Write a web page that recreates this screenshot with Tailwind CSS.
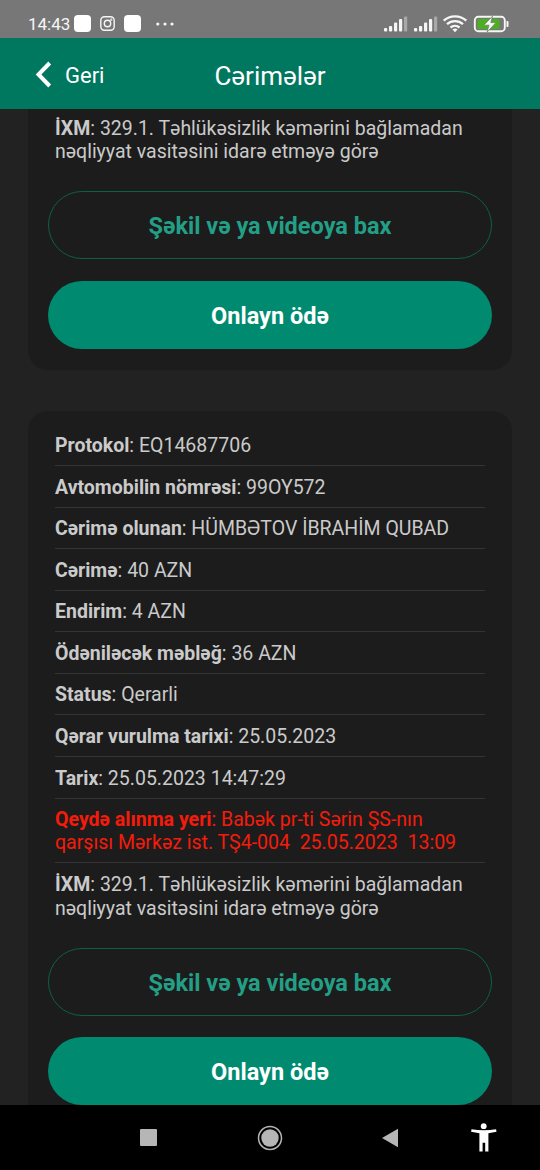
<!DOCTYPE html>
<html lang="az">
<head>
<meta charset="utf-8">
<title>Cərimələr</title>
<script src="https://cdn.jsdelivr.net/npm/@tailwindcss/browser@4"></script>
</head>
<body class="flex h-[1170px] w-[540px] flex-col overflow-hidden bg-[#222222] font-['Roboto',sans-serif] text-[19.500px] leading-[23.300px] text-[#cacaca]">
  <div class="flex h-[38px] shrink-0 items-center justify-between bg-[#777777] pt-[9px] pr-[30px] pl-7 text-[#f6f6f6]">
    <div class="flex items-center">
      <span class="w-[46px] whitespace-nowrap text-[17px] leading-5">14:43</span>
      <i class="block size-[17px] rounded-[4px] bg-white"></i>
      <svg class="ml-[9px] size-[15px]" viewBox="0 0 15 15" fill="none" stroke="currentColor" stroke-width="1.4"><rect x=".8" y=".8" width="13.4" height="13.4" rx="3.6"/><circle cx="7.5" cy="7.5" r="3.2"/><circle cx="11.3" cy="3.7" r=".4"/></svg>
      <i class="ml-[9px] block size-[17px] rounded-[4px] bg-white"></i>
      <svg class="ml-[14px] h-4 w-5" viewBox="0 0 20 16" fill="currentColor"><circle cx="2.8" cy="8" r="1.6"/><circle cx="10" cy="8" r="1.6"/><circle cx="17" cy="8" r="1.6"/></svg>
    </div>
    <svg class="h-[18px] w-[127px]" viewBox="0 0 127 18" fill="currentColor">
      <g id="signal"><rect x="1" y="13" width="3.2" height="3.5" rx="1"/><rect x="6" y="11" width="3.2" height="5.5" rx="1"/><rect x="11" y="7.500" width="3.2" height="9" rx="1"/><rect x="16" y="4" width="3.2" height="12.500" rx="1"/><rect x="21" y="1.500" width="3.2" height="15" rx="1" opacity=".4"/></g>
      <use href="#signal" x="30"/>
      <g fill="none" stroke="currentColor" stroke-width="2.300"><path d="M60.700 5.700C66.800-.2 77.200-.2 83.300 5.700M64 9.200c4.400-4.100 11.600-4.100 16 0M67.500 12.500c2.600-2.200 6.400-2.200 9 0"/></g>
      <path d="M69.500 14.500q2.500-2 5 0L72 17.200z"/>
      <rect x="94.500" y="4" width="22" height="10" fill="#4caf22"/>
      <rect x="91.800" y="1.800" width="30" height="14.400" rx="3.500" fill="none" stroke="currentColor" stroke-width="1.900"/>
      <path d="M123.500 6h1q1 0 1 1v4q0 1-1 1h-1z"/>
      <path d="M109.500 1.200 100.800 10.200h5.200l-2 7 9-9.600h-5.200z" stroke="#6b8a60" stroke-width=".8"/>
    </svg>
  </div>
  <header class="grid h-[71px] shrink-0 grid-cols-3 items-center bg-[#00775f] pt-[5px] text-white">
    <div class="flex items-center pl-[35px] text-[22px] leading-7">
      <svg class="-mt-[4px] mr-[13px] h-[27px] w-[17px] shrink-0" viewBox="0 0 17 27" fill="none" stroke="currentColor" stroke-width="4"><path d="M14.700 2 3.500 13.500 14.700 25"/></svg>Geri
    </div>
    <h1 class="text-center text-[26px] leading-7">Cərimələr</h1>
  </header>
  <main class="min-h-0 flex-1 overflow-hidden px-7">
    <section class="h-[260.500px] rounded-b-[20px] bg-[#1c1c1c] px-5 pt-[7.500px]">
      <p class="px-[7px] whitespace-nowrap"><b>İXM</b>: 329.1. Təhlükəsizlik kəmərini bağlamadan<br>nəqliyyat vasitəsini idarə etməyə görə</p>
      <button class="mt-[27.900px] block h-[68px] w-full rounded-full border border-[#0c6048] pt-[3px] text-[23.500px] font-bold text-[#239f86]">Şəkil və ya videoya bax</button>
      <button class="mt-[22px] block h-[68px] w-full rounded-full bg-[#008b70] pt-[3px] text-[23.500px] font-bold text-white">Onlayn ödə</button>
    </section>
    <section class="mt-[41px] rounded-t-[20px] bg-[#1c1c1c] px-5 pt-[13.900px]">
      <div class="px-[7px] whitespace-nowrap [&>p]:border-b [&>p]:border-[#343434] [&>p]:pt-[9.600px] [&>p]:pb-[7.700px]">
        <p><b>Protokol</b>: EQ14687706</p>
        <p><b>Avtomobilin nömrəsi</b>: 99OY572</p>
        <p><b>Cərimə olunan</b>: HÜMBƏTOV İBRAHİM QUBAD</p>
        <p><b>Cərimə</b>: 40 AZN</p>
        <p><b>Endirim</b>: 4 AZN</p>
        <p><b>Ödəniləcək məbləğ</b>: 36 AZN</p>
        <p><b>Status</b>: Qerarli</p>
        <p><b>Qərar vurulma tarixi</b>: 25.05.2023</p>
        <p><b>Tarix</b>: 25.05.2023 14:47:29</p>
        <p class="text-[19.550px] text-[#f51b0b]"><b>Qeydə alınma yeri</b>: Babək pr-ti Sərin ŞS-nın<br>qarşısı Mərkəz ist. TŞ4-004&nbsp; 25.05.2023&nbsp; 13:09</p>
      </div>
      <p class="px-[7px] pt-[9.900px] whitespace-nowrap"><b>İXM</b>: 329.1. Təhlükəsizlik kəmərini bağlamadan<br>nəqliyyat vasitəsini idarə etməyə görə</p>
      <button class="mt-[27.900px] block h-[68px] w-full rounded-full border border-[#0c6048] pt-[3px] text-[23.500px] font-bold text-[#239f86]">Şəkil və ya videoya bax</button>
      <button class="mt-[21px] block h-[68px] w-full rounded-full bg-[#008b70] pt-[3px] text-[23.500px] font-bold text-white">Onlayn ödə</button>
    </section>
  </main>
  <nav class="flex h-[65px] shrink-0 items-center bg-black pl-[139.500px] text-[#b6b6b6]">
    <i class="block size-[17px] rounded-[1px] bg-current"></i>
    <svg class="ml-[100.500px] size-[26px]" viewBox="0 0 26 26" fill="currentColor"><circle cx="13" cy="13" r="8.700"/><circle cx="13" cy="13" r="11.500" fill="none" stroke="currentColor" stroke-width="1.500"/></svg>
    <svg class="ml-[99px] h-5 w-[17px]" viewBox="0 0 17 20" fill="currentColor"><path d="M0 10 16 .8v18.400z"/></svg>
    <svg class="ml-[72px] h-[29px] w-[26px] text-white" viewBox="0 0 26 29" fill="currentColor"><circle cx="12.700" cy="3.200" r="2.900"/><path d="M.5 6.200q12.200 2.200 24.600 0l.4 2.600-8.100 1.400v18.300h-3.200v-8.700h-2.600v8.700H8.400V10.200L.1 8.800z"/></svg>
  </nav>
</body>
</html>
